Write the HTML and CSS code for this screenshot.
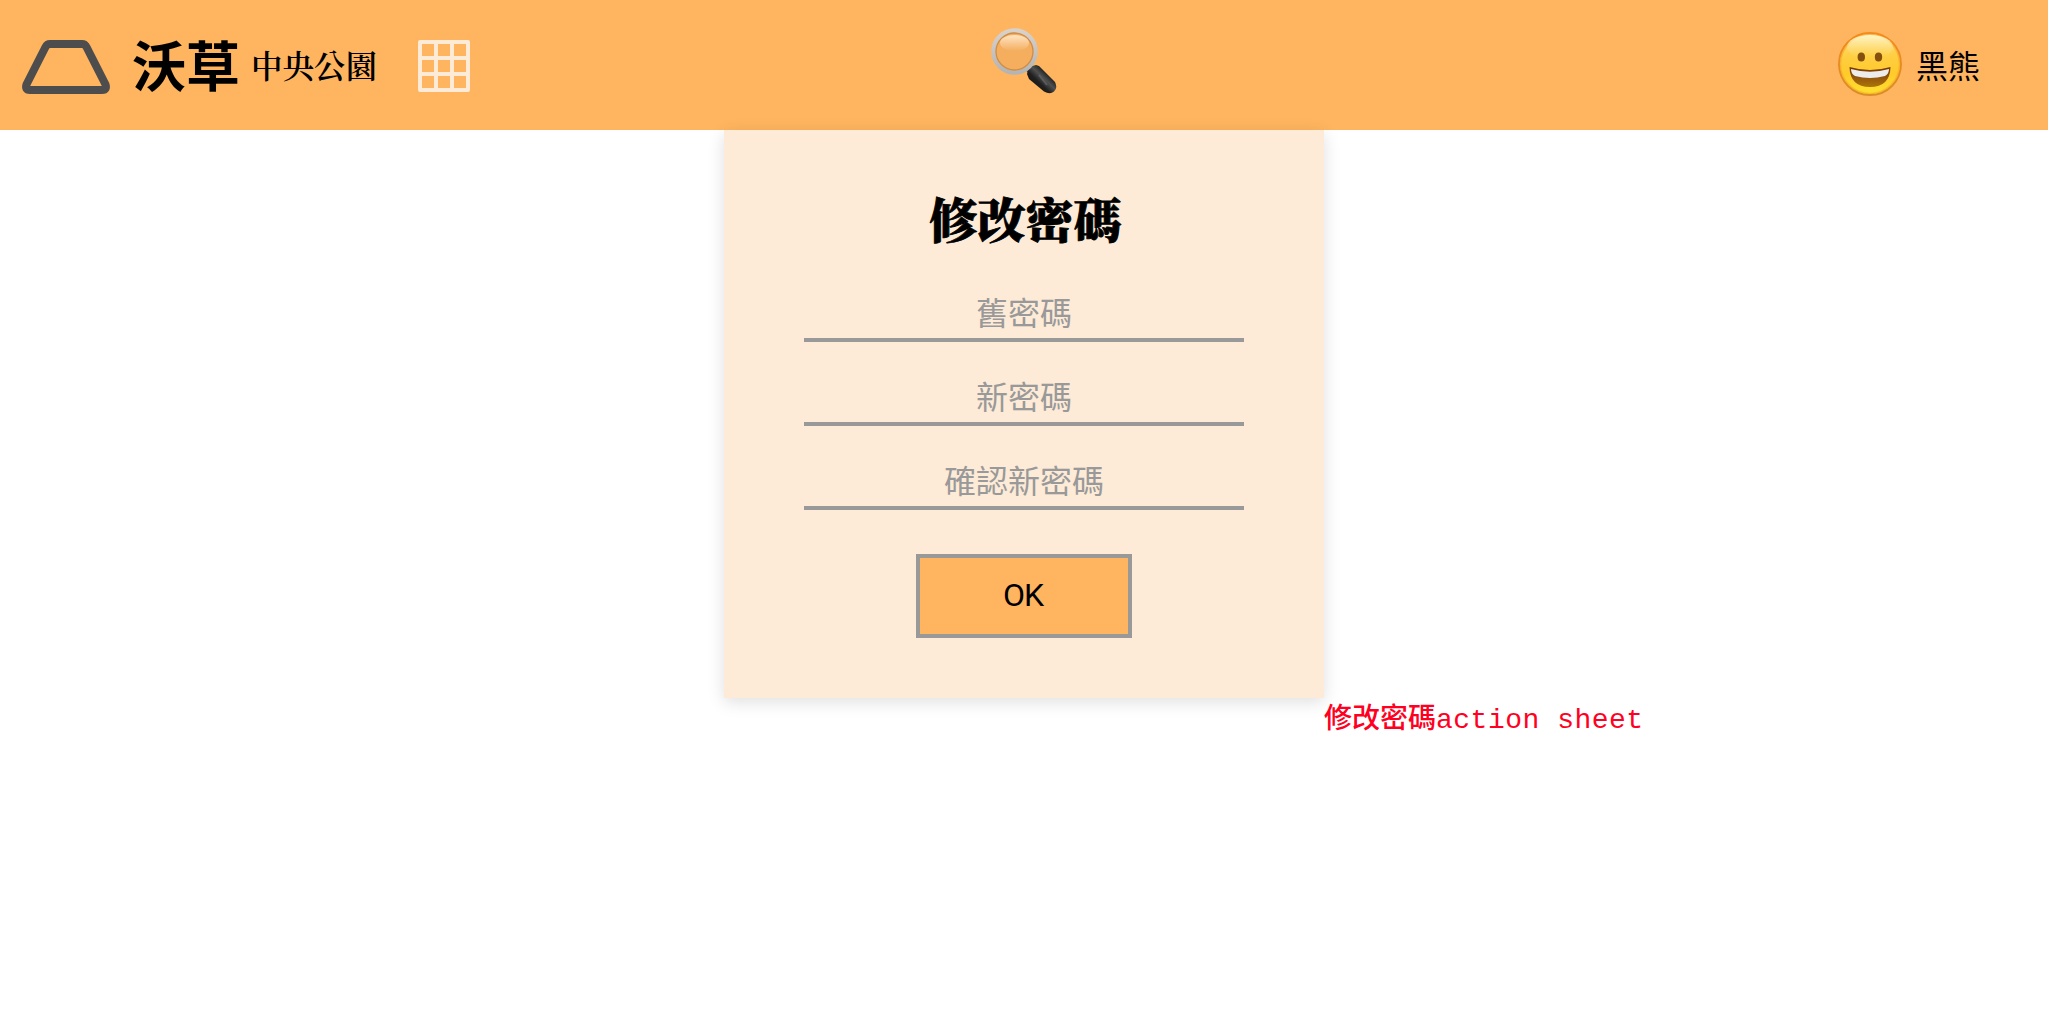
FILE: index.html
```html
<!DOCTYPE html>
<html lang="zh-Hant">
<head>
<meta charset="utf-8">
<title>修改密碼</title>
<link rel="stylesheet" href="styles.css">
</head>
<body>
<header class="topbar">
  <div class="brand">
    <svg class="brand-mark" viewBox="0 0 88 54" aria-hidden="true">
      <path d="M28 4H60Q63 4 64.500 7L83.300 44Q85.500 50 80 50H8Q2.500 50 4.700 44L23.500 7Q25 4 28 4Z" fill="none" stroke="#4d4d4d" stroke-width="8"/>
    </svg>
    <span class="brand-name">沃草</span>
    <span class="brand-sub">中央公園</span>
    <svg class="grid-icon" viewBox="0 0 52 52" aria-hidden="true">
      <path d="M2 2H50V50H2ZM18 2V50M34 2V50M2 18H50M2 34H50" fill="none" stroke="#fdebd7" stroke-width="4" stroke-linejoin="round"/>
    </svg>
  </div>
  <svg class="search-icon" viewBox="0 0 66 68" aria-hidden="true">
    <defs>
      <linearGradient id="rim" x1="0" y1="0" x2="0" y2="1"><stop offset="0" stop-color="#d8d2cc"/><stop offset="1" stop-color="#b4b4b4"/></linearGradient>
      <linearGradient id="shine" x1="0" y1="0" x2="0" y2="1"><stop offset="0" stop-color="#ffe4c4"/><stop offset="1" stop-color="#f4ae5e"/></linearGradient>
      <linearGradient id="handle" x1="0" y1="1" x2="1" y2="0"><stop offset="0" stop-color="#0b0b0b"/><stop offset=".4" stop-color="#202020"/><stop offset=".55" stop-color="#505050"/><stop offset=".7" stop-color="#202020"/><stop offset="1" stop-color="#101010"/></linearGradient>
    </defs>
    <path d="M38 41L44 47" stroke="#55514c" stroke-width="7"/>
    <path d="M36 43L41 38" stroke="#302d2a" stroke-width="1.500"/>
    <path d="M36 46Q37 38 45 37L48 38L64 54Q67 60 63 63.500Q59 67 53 63.500L38 51Z" fill="url(#handle)"/>
    <path d="M48 47L56 57" stroke="#777" stroke-width="2" opacity=".5"/>
    <circle cx="23.500" cy="23.500" r="21" fill="#f4ae5e" stroke="url(#rim)" stroke-width="4.500"/>
    <circle cx="23.500" cy="23.500" r="18.500" fill="none" stroke="#cf8d47" stroke-width="1.300"/>
    <ellipse cx="23.500" cy="15" rx="14.500" ry="8" fill="url(#shine)"/>
  </svg>
  <div class="user">
    <svg class="avatar" viewBox="0 0 64 64" aria-hidden="true">
      <defs>
        <linearGradient id="face" x1="0" y1="0" x2="0" y2="1"><stop offset="0" stop-color="#ffe08a"/><stop offset=".35" stop-color="#ffcf45"/><stop offset=".65" stop-color="#ffca2b"/><stop offset="1" stop-color="#ffe22f"/></linearGradient>
        <linearGradient id="edge" x1="0" y1="0" x2="0" y2="1"><stop offset="0" stop-color="#f58a1c"/><stop offset="1" stop-color="#d98c28"/></linearGradient>
        <linearGradient id="gloss" x1="0" y1="0" x2="0" y2="1"><stop offset="0" stop-color="#fff5c8"/><stop offset="1" stop-color="#ffdc70" stop-opacity="0"/></linearGradient>
        <linearGradient id="mouth" x1="0" y1="0" x2="0" y2="1"><stop offset="0" stop-color="#753508"/><stop offset="1" stop-color="#ad740b"/></linearGradient>
      </defs>
      <circle cx="32" cy="32" r="31" fill="url(#face)" stroke="url(#edge)" stroke-width="2"/>
      <circle cx="32" cy="32" r="29.500" fill="none" stroke="#f9a72a" stroke-width="1.500" opacity=".6"/>
      <ellipse cx="32" cy="15" rx="23" ry="12" fill="url(#gloss)"/>
      <ellipse cx="23.300" cy="25" rx="3.700" ry="4.500" fill="#85500d"/>
      <ellipse cx="40.500" cy="25" rx="3.700" ry="4.500" fill="#85500d"/>
      <path d="M11.500 35Q32 41 52.500 35Q52 55 32 55Q12 55 11.500 35Z" fill="url(#mouth)"/>
      <path d="M13 37Q32 42.500 51 37Q51 42 47 44Q32 48 17 44Q13 42 13 37Z" fill="#ececec"/>
    </svg>
    <span class="user-name">黑熊</span>
  </div>
</header>
<main class="stage">
  <form class="sheet">
    <h1 class="sheet-title">修改密碼</h1>
    <input class="field" type="password" placeholder="舊密碼">
    <input class="field" type="password" placeholder="新密碼">
    <input class="field" type="password" placeholder="確認新密碼">
    <button class="submit" type="button">OK</button>
  </form>
  <p class="note"><span class="note-name">修改密碼</span>action sheet</p>
</main>
</body>
</html>
```
FILE: styles.css
```css
* { box-sizing: border-box; }

body {
  margin: 0;
  min-height: 100vh;
  background: #fff;
  color: #000;
  font-family: "Noto Sans CJK TC", sans-serif;
}

.topbar {
  display: grid;
  grid-template-columns: 1fr auto 1fr;
  height: 130px;
  padding: 0 68px 0 22px;
  background: #ffb55f;
}

.brand {
  display: flex;
  align-items: center;
  height: 132px;
}

.brand-mark { width: 88px; height: 54px; margin-top: 2px; }

.brand-name {
  margin: 0 0 4px 22px;
  font-size: 54px;
  font-weight: 700;
  line-height: 64px;
}

.brand-sub {
  margin: 0 0 3px 11px;
  font-family: "Noto Serif CJK TC", "Noto Sans CJK TC", serif;
  font-size: 31.500px;
  font-weight: 600;
  line-height: 40px;
}

.grid-icon { width: 52px; height: 52px; margin-left: 41px; }

.search-icon {
  width: 66px;
  height: 68px;
  margin: 28px 0 0 46px;
}

.user {
  display: flex;
  justify-content: flex-end;
  align-items: center;
  height: 128px;
}

.avatar { width: 64px; height: 64px; }

.user-name {
  margin: 0 0 0 14px;
  font-size: 32px;
  line-height: 40px;
}

.stage {
  display: grid;
  grid-template-columns: 1fr 600px 1fr;
  grid-template-rows: 566px auto;
}

.sheet {
  grid-column: 2;
  display: flex;
  flex-direction: column;
  align-items: center;
  height: 568px;
  padding: 52px 80px 0;
  background: #fdebd7;
  box-shadow: 0 4px 16px rgba(0, 0, 0, .13);
}

.sheet-title {
  margin: 0 0 24px;
  padding-left: 3px;
  font-family: "Noto Serif CJK TC", "Noto Sans CJK TC", serif;
  font-size: 48px;
  font-weight: 900;
  line-height: 72px;
  -webkit-text-stroke: .800px #000;
}

.field {
  width: 440px;
  height: 64px;
  margin: 0 0 20px;
  padding: 5px 0 0;
  border: 0;
  border-bottom: 4px solid #999;
  background: none;
  font: 32px/48px "Noto Sans CJK TC", sans-serif;
  text-align: center;
}

.field::placeholder { color: #999; opacity: 1; }

.submit {
  width: 216px;
  height: 84px;
  margin-top: 24px;
  padding: 0 2px 2px 0;
  border: 4px solid #999;
  background: #ffb55f;
  color: #000;
  font: 32px/48px Roboto, sans-serif;
  letter-spacing: -1px;
}

.note {
  grid-column: 3;
  grid-row: 2;
  margin: 0;
  color: #ff0022;
  font: 28px/40px "Liberation Mono", monospace;
  letter-spacing: .500px;
  white-space: nowrap;
}

.note-name {
  font-family: "Noto Sans CJK TC", sans-serif;
  font-weight: 500;
  letter-spacing: 0;
}
```
